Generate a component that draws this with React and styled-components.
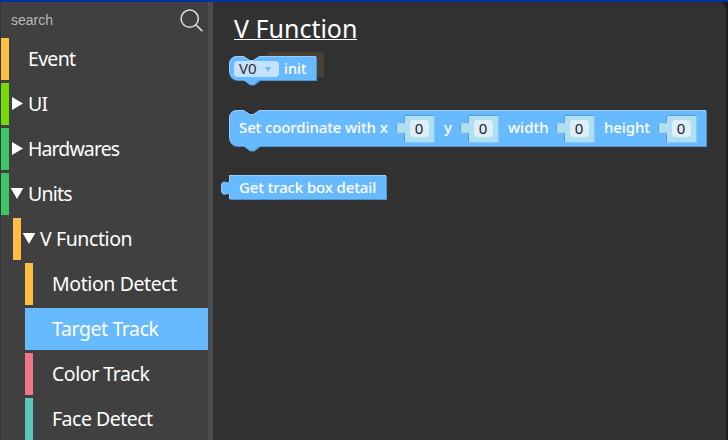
import React from "react";
import styled, { createGlobalStyle } from "styled-components";

const Global = createGlobalStyle`
  * { box-sizing: border-box; }
  body { margin: 0; background: #1e1e1e; overflow: hidden; }
`;

const App_ = styled.div`
  display: flex;
  width: 728px;
  height: 440px;
  border-top: 2px solid #0031a0;
  background: #1d1d1d;
  color: #fff;
  font-family: "Noto Sans", "Open Sans", sans-serif;
  overflow: hidden;
`;

const Sidebar = styled.nav`
  width: 213px;
  flex: none;
  border-left: 1px solid #353535;
  border-right: 5px solid #4d4d4d;
  background: #404040;
`;

const Search = styled.div`
  display: flex;
  justify-content: space-between;
  height: 36px;
  padding: 6px 4px 0 10px;
  color: #b9b9b9;
  font: 14px/24px "Liberation Sans", Arial, sans-serif;
`;

const List = styled.div`
  display: flex;
  flex-direction: column;
  gap: 3px;
`;

const Row = styled.div`
  display: flex;
  flex: none;
  align-items: center;
  height: 42px;
  margin-left: ${(p) => p.$depth * 12}px;
  border-left: 8px solid ${(p) => p.$color};
  background: ${(p) => (p.$selected ? p.$color : "transparent")};
`;

const Marker = styled.span`
  display: flex;
  width: 19px;
  flex: none;
  padding-left: ${(p) => (p.$open ? 1 : 2)}px;
  margin-top: -2px;
`;

const Label = styled.span`
  font-size: ${(p) => p.$size || 19.5}px;
  font-weight: ${(p) => p.$weight || 400};
  line-height: 24px;
  letter-spacing: ${(p) => p.$track || 0}px;
  white-space: pre;
`;

const Workspace = styled.main`
  width: 513px;
  height: 438px;
  padding: 11px 0 0 16px;
  border-top-right-radius: 7px;
  background: #313131 radial-gradient(circle at 10.5px 10.5px, #383838 0.7px, transparent 1px) 0 0 / 20px 20px;
`;

const Title = styled.h1`
  width: 123px;
  height: 27px;
  margin: 0 0 0 5px;
  border-bottom: 1.5px solid #fff;
  font-size: 25px;
  font-weight: 400;
  line-height: 30px;
  white-space: pre;
`;

const Block = styled.div`
  position: relative;
  display: flex;
  align-items: center;
  width: ${(p) => p.$w}px;
  height: ${(p) => p.$h}px;
  margin-top: ${(p) => p.$gap}px;
  padding-left: ${(p) => p.$pad}px;
`;

const Shape = styled.svg`
  position: absolute;
  left: -9px;
  top: -1px;
  overflow: visible;
`;

const Text = styled(Label)`
  position: relative;
  width: ${(p) => p.$w}px;
  flex: none;
  margin-right: ${(p) => p.$after || 0}px;
  margin-top: ${(p) => p.$lift || -2}px;
`;

const Dropdown = styled.div`
  position: relative;
  display: flex;
  align-items: center;
  justify-content: space-between;
  width: 45px;
  height: 16px;
  margin-right: 5px;
  padding: 0 8px 0 5px;
  border-radius: 4px;
  background: #c3e2ff;
  color: #303030;
`;

const DropdownLabel = styled(Label)`
  margin-top: -2px;
`;

const DropdownArrow = styled.svg`
  margin-top: 2px;
`;

const Socket = styled.div`
  position: relative;
  display: flex;
  flex: none;
  align-items: center;
  justify-content: center;
  width: 30px;
  height: 28px;
  margin-right: 10px;
`;

const NumberField = styled.span`
  position: relative;
  width: 19px;
  height: 17px;
  border-radius: 4px;
  background: #deeffa;
  color: #1c1c1c;
  font-size: 15px;
  line-height: 17px;
  text-align: center;
`;

const Ghost = styled.svg`
  position: absolute;
  left: 35px;
  top: -4px;
`;

const rows = [
  { label: "Event", color: "#ffc043", depth: 0, track: -0.7 },
  { label: "UI", color: "#76d90a", depth: 0, open: false, track: -0.8 },
  { label: "Hardwares", color: "#3cc668", depth: 0, open: false, track: -0.9 },
  { label: "Units", color: "#3cc668", depth: 0, open: true, track: -0.8 },
  { label: "V Function", color: "#ffbd45", depth: 1, open: true, track: -0.4 },
  { label: "Motion Detect", color: "#ffbd45", depth: 2, track: -0.4 },
  { label: "Target Track", color: "#68baff", depth: 2, selected: true, track: -0.4 },
  { label: "Color Track", color: "#f07585", depth: 2, track: -0.45 },
  { label: "Face Detect", color: "#5ac8b8", depth: 2, track: -0.5 },
];

function StatementShape({ w, h }) {
  const d = `M8 0H14.5l6 4h4l6-4H${w}V${h}H30.500l-6 4.500h-4l-6-4.500H8a8 8 0 0 1-8-8V8a8 8 0 0 1 8-8z`;
  return (
    <Shape width={w + 10} height={h + 8}>
      <g transform="translate(9 1)">
        <path d={d} transform="translate(1 1)" fill="#5195cc" />
        <path d={d} fill="#68baff" />
        <path
          d={`M.5 ${h - 8}V8A7.5 7.5 0 0 1 8 .5H14.500l6 4h4l6-4H${w}`}
          fill="none"
          stroke="#95cfff"
        />
      </g>
    </Shape>
  );
}

function ValueShape({ w, h, fill, light, dark }) {
  const d = `M0 0H${w}V${h}H0V20c0-6-8 5-8-7s8-1 8-7z`;
  return (
    <Shape width={w + 10} height={h + 3}>
      <g transform="translate(9 1)">
        <path d={d} transform="translate(1 1)" fill={dark} />
        <path d={d} fill={fill} />
        <path d={`M.5 ${h}V20c0-6-8 5-8-7s8-1 8-7V.5H${w}`} fill="none" stroke={light} />
      </g>
    </Shape>
  );
}

function NumberSocket() {
  return (
    <Socket>
      <ValueShape w={30} h={27} fill="#afdff2" light="#5c9bcc" dark="#86c6f8" />
      <NumberField>0</NumberField>
    </Socket>
  );
}

function Triangle({ open }) {
  return (
    <svg width="14" height="13" viewBox="0 0 14 13">
      <path d={open ? "M.7 1h12.6L7 12z" : "M1 0v13L12 6.5z"} fill="#fff" />
    </svg>
  );
}

export default function App() {
  return (
    <>
      <Global />
      <App_>
        <Sidebar>
          <Search>
            search
            <svg width="24" height="24" viewBox="0 0 24 24" fill="none" stroke="#dedede" strokeWidth="1.5">
              <circle cx="9.7" cy="10.7" r="8.6" />
              <path d="m15.8 16.8 6.5 6.3" />
            </svg>
          </Search>
          <List>
            {rows.map((r) => (
              <Row key={r.label} $depth={r.depth} $color={r.color} $selected={r.selected}>
                <Marker $open={r.open}>{r.open !== undefined && <Triangle open={r.open} />}</Marker>
                <Label $track={r.track}>{r.label}</Label>
              </Row>
            ))}
          </List>
        </Sidebar>
        <Workspace>
          <Title>V Function</Title>
          <Block $w={88} $h={25} $gap={16} $pad={5}>
            <Ghost width="60" height="26">
              <path d="M0 26V5l5-5h55v25H0z" fill="#474033" />
            </Ghost>
            <StatementShape w={87} h={24} />
            <Dropdown>
              <DropdownLabel $size={15}>V0</DropdownLabel>
              <DropdownArrow width="6" height="6">
                <path d="M0 0h6L3 5z" fill="#68baff" />
              </DropdownArrow>
            </Dropdown>
            <Text $size={14.5} $weight={500}>init</Text>
          </Block>
          <Block $w={477} $h={37} $gap={29} $pad={10}>
            <StatementShape w={477} h={36} />
            <Text $size={15} $weight={500} $track={-0.12} $lift={-4} $w={149} $after={16}>Set coordinate with x</Text>
            <NumberSocket />
            <Text $size={15} $weight={500} $lift={-4} $w={9} $after={15}>y</Text>
            <NumberSocket />
            <Text $size={15} $weight={500} $lift={-4} $w={40} $after={16}>width</Text>
            <NumberSocket />
            <Text $size={15} $weight={500} $track={-0.1} $lift={-4} $w={46} $after={16}>height</Text>
            <NumberSocket />
          </Block>
          <Block $w={158} $h={25} $gap={28} $pad={10}>
            <ValueShape w={157} h={24} fill="#68baff" light="#95cfff" dark="#5195cc" />
            <Text $size={15} $weight={500} $track={-0.13}>Get track box detail</Text>
          </Block>
        </Workspace>
      </App_>
    </>
  );
}
